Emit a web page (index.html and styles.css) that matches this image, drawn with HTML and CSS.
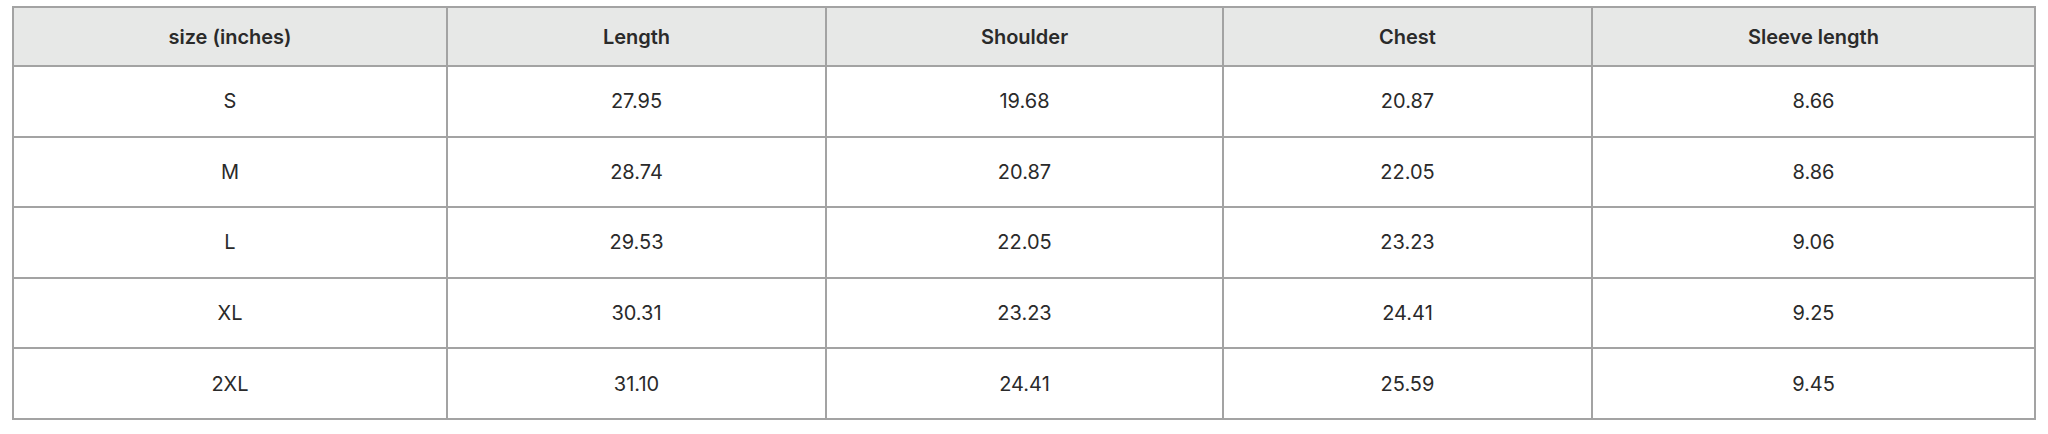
FILE: index.html
```html
<!DOCTYPE html>
<html>
<head>
<meta charset="utf-8">
<link rel="stylesheet" href="styles.css">
</head>
<body>
<table class="size-table">
  <colgroup>
    <col class="c1"><col class="c2"><col class="c3"><col class="c4"><col class="c5">
  </colgroup>
  <thead>
    <tr><th>size (inches)</th><th>Length</th><th>Shoulder</th><th>Chest</th><th>Sleeve length</th></tr>
  </thead>
  <tbody>
    <tr><td>S</td><td>27.95</td><td>19.68</td><td>20.87</td><td>8.66</td></tr>
    <tr><td>M</td><td>28.74</td><td>20.87</td><td>22.05</td><td>8.86</td></tr>
    <tr><td>L</td><td>29.53</td><td>22.05</td><td>23.23</td><td>9.06</td></tr>
    <tr><td>XL</td><td>30.31</td><td>23.23</td><td>24.41</td><td>9.25</td></tr>
    <tr><td>2XL</td><td>31.10</td><td>24.41</td><td>25.59</td><td>9.45</td></tr>
  </tbody>
</table>
</body>
</html>
```
FILE: styles.css
```css
html, body {
  margin: 0;
  background: #ffffff;
}
body {
  padding: 6px 12px;
  font-family: Inter, "Noto Sans", sans-serif;
  color: #2a2a2a;
}
.size-table {
  border-collapse: collapse;
  table-layout: fixed;
  width: 2022px;
}
.c1 { width: 434px; }
.c2 { width: 379px; }
.c3 { width: 397px; }
.c4 { width: 369px; }
.c5 { width: 443px; }
.size-table th,
.size-table td {
  border: 2px solid #a3a3a3;
  text-align: center;
  vertical-align: middle;
  padding: 0;
}
.size-table th {
  background: #e7e8e7;
  height: 57px;
  font-size: 20px;
  font-weight: 600;
  color: #2a2a2a;
}
.size-table td {
  height: 68.6px;
  font-size: 20px;
  font-weight: 400;
}
```
